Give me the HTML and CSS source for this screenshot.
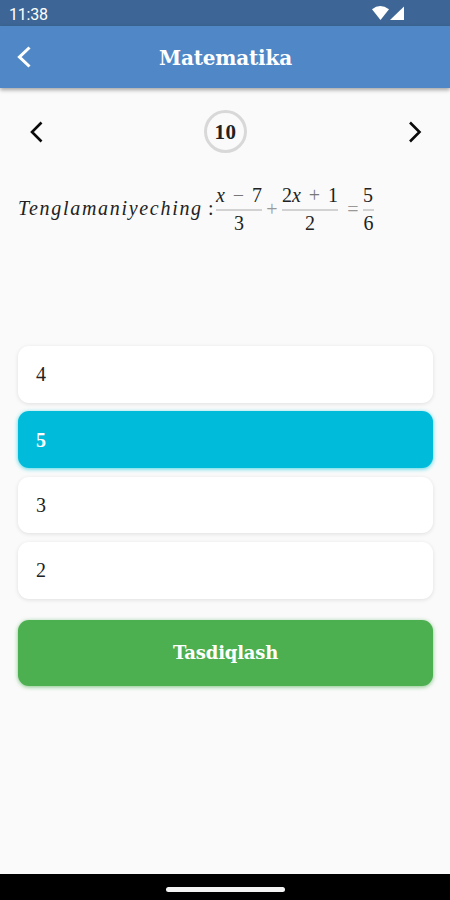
FILE: index.html
```html
<!DOCTYPE html>
<html lang="uz">
<head>
    <meta charset="UTF-8">
    <meta name="viewport" content="width=device-width, initial-scale=1.0">
    <title>Matematika</title>
    <link rel="stylesheet" href="styles.css">
</head>
<body>
    <div class="status-bar">
        <span class="time">11:38</span>
        <svg class="status-icons" width="34" height="16" viewBox="0 0 34 16">
            <path d="M1 4.2Q9 -2 18 4.2L9.5 15Z" fill="#fff"/>
            <path d="M19 15L33 1.5V15Z" fill="#fff"/>
        </svg>
    </div>

    <header class="app-bar">
        <svg class="back" width="16" height="24" viewBox="0 0 16 24">
            <path d="M13.5 2.5L3.5 12L13.5 21.5" fill="none" stroke="#fff" stroke-width="3.1"/>
        </svg>
        <h1 class="title">Matematika</h1>
    </header>

    <main class="content">
        <!-- savol raqami -->
        <div class="pager">
            <svg width="14" height="22" viewBox="0 0 14 22">
                <path d="M12.5 1.5L3 11L12.5 20.5" fill="none" stroke="#0a0a0a" stroke-width="2.6"/>
            </svg>
            <div class="number"><span>10</span></div>
            <svg width="14" height="22" viewBox="0 0 14 22">
                <path d="M2 1.5L11.5 11L2 20.5" fill="none" stroke="#0a0a0a" stroke-width="2.6"/>
            </svg>
        </div>

        <!-- tenglama -->
        <div class="formula">
            <span class="words">Tenglamaniyeching</span>
            <span class="colon">:</span>
            <span class="frac frac-a">
                <span class="num"><i>x</i><span class="sign">−</span><span>7</span></span>
                <span class="den">3</span>
            </span>
            <span class="op plus">+</span>
            <span class="frac frac-b">
                <span class="num"><span>2<i>x</i></span><span class="sign">+</span><span>1</span></span>
                <span class="den">2</span>
            </span>
            <span class="op equals">=</span>
            <span class="frac frac-c">
                <span class="num">5</span>
                <span class="den">6</span>
            </span>
        </div>

        <div class="options">
            <div class="option">4</div>
            <div class="option selected">5</div>
            <div class="option">3</div>
            <div class="option">2</div>
        </div>

        <button class="submit">Tasdiqlash</button>
    </main>

    <div class="nav-bar">
        <div class="handle"></div>
    </div>
</body>
</html>
```
FILE: styles.css
```css
* {
    margin: 0;
    padding: 0;
    box-sizing: border-box;
}

body {
    height: 900px;
    display: flex;
    flex-direction: column;
    background: #fafafa;
    color: #222;
    font-family: "Liberation Serif", serif;
    overflow: hidden;
}

/* status bar */
.status-bar {
    height: 26px;
    padding: 0 45px 0 9px;
    display: flex;
    justify-content: space-between;
    align-items: center;
    background: #3d6696;
    color: #fff;
}

.time {
    padding-top: 2px;
    font-family: Roboto, sans-serif;
    font-size: 16px;
    letter-spacing: -0.2px;
}

/* app bar */
.app-bar {
    height: 62px;
    padding: 0 16px;
    display: flex;
    align-items: center;
    background: #4f87c7;
    box-shadow: 0 2px 4px rgba(0, 0, 0, 0.35);
}

.title {
    flex: 1;
    padding: 2px 15px 0 0;
    text-align: center;
    color: #fff;
    font-family: "DejaVu Serif", serif;
    font-size: 20px;
    font-weight: bold;
    letter-spacing: -0.2px;
}

.content {
    flex: 1;
    padding: 22px 17px 0 18px;
}

.pager {
    height: 43px;
    padding: 0 11px;
    display: flex;
    justify-content: space-between;
    align-items: center;
}

.number {
    width: 43px;
    height: 43px;
    padding-top: 1px;
    display: flex;
    justify-content: center;
    align-items: center;
    border: 3px solid #d8d8d8;
    border-radius: 50%;
    font-size: 21px;
    font-weight: bold;
    letter-spacing: 0.5px;
}

/* formula */
.formula {
    height: 50px;
    margin-top: 31px;
    display: flex;
    align-items: center;
    font-size: 20px;
    line-height: 24px;
}

.words {
    width: 188px;
    padding-bottom: 3px;
    font-style: italic;
    letter-spacing: 1.7px;
    white-space: nowrap;
}

.colon {
    width: 10px;
    padding: 0 0 3px 2px;
}

.frac {
    display: flex;
    flex-direction: column;
}

.frac-a {
    width: 46px;
}

.frac-b {
    width: 56px;
}

.frac-c {
    width: 11px;
}

.num {
    padding-bottom: 2px;
    display: flex;
    justify-content: space-between;
    border-bottom: 2px solid #d2d2d2;
}

.den {
    text-align: center;
}

.sign {
    color: #777;
}

.op {
    color: #999;
    text-align: center;
}

.plus {
    width: 20px;
}

.equals {
    width: 25px;
    padding-left: 5px;
}

/* answers */
.options {
    margin-top: 112px;
    display: flex;
    flex-direction: column;
    gap: 8.5px;
}

.option {
    height: 56.75px;
    padding: 1px 0 0 18px;
    display: flex;
    align-items: center;
    background: #fff;
    border-radius: 11px;
    box-shadow: 0 1px 4px rgba(0, 0, 0, 0.11);
    font-size: 20px;
}

.selected {
    background: #00bcda;
    color: #fff;
    font-weight: bold;
    box-shadow: 0 1px 4px rgba(0, 200, 220, 0.7);
}

.submit {
    width: 100%;
    height: 66px;
    margin-top: 21px;
    background: #4caf50;
    color: #fff;
    border: none;
    border-radius: 11px;
    box-shadow: 0 1px 4px rgba(76, 175, 80, 0.7);
    font-family: "DejaVu Serif", serif;
    font-size: 18px;
    font-weight: bold;
    letter-spacing: -0.2px;
}

/* system navigation */
.nav-bar {
    height: 26px;
    display: flex;
    justify-content: center;
    align-items: center;
    padding-top: 4px;
    background: #000;
}

.handle {
    width: 119px;
    height: 5px;
    border-radius: 3px;
    background: #f4f4f4;
}
```
